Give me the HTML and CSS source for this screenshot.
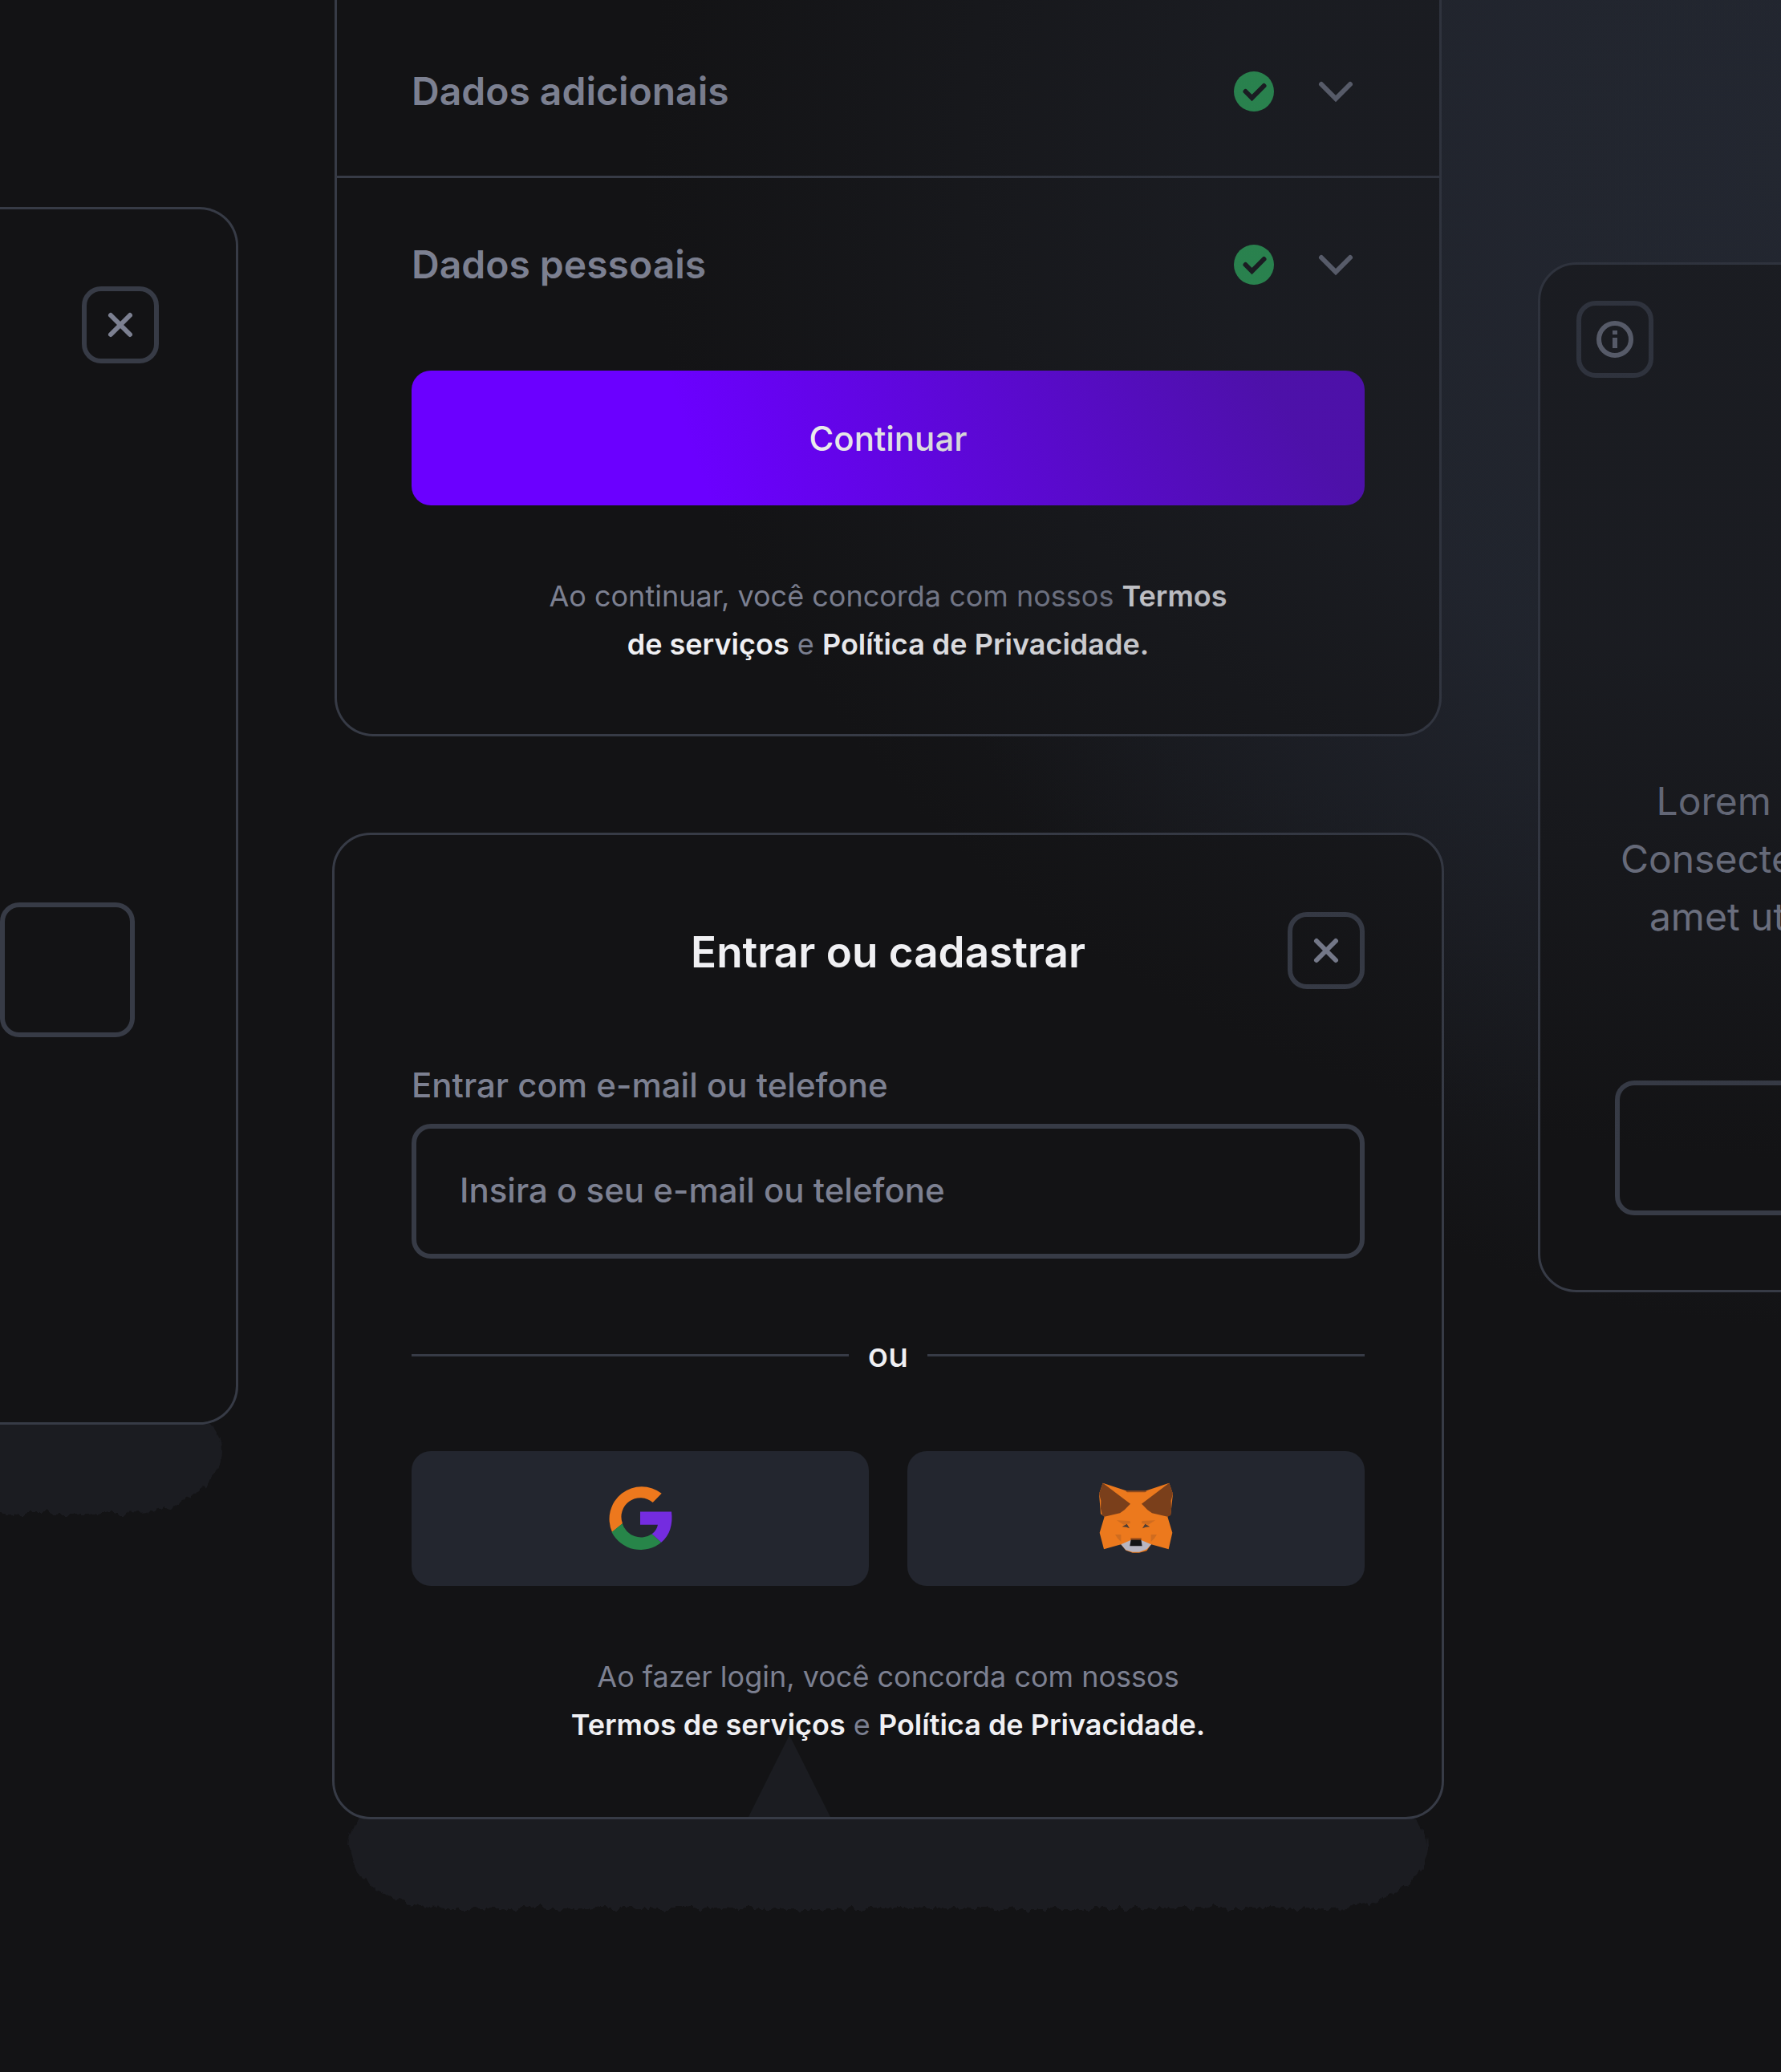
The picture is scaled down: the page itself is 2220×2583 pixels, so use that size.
FILE: index.html
```html
<!DOCTYPE html>
<html lang="pt-BR">
<head>
    <meta charset="UTF-8">
    <meta name="viewport" content="width=device-width, initial-scale=1">
    <title>Entrar ou cadastrar</title>
    <link rel="stylesheet" href="styles.css">
</head>
<body>
<main class="board">

    <section class="card card-left">
        <button type="button" class="icon-button" aria-label="Fechar">
            <svg width="48" height="48" viewBox="0 0 48 48"><path d="M12 12L36 36M36 12L12 36" stroke="#7c8091" stroke-width="6" stroke-linecap="round"/></svg>
        </button>
        <input type="text" class="field code-field" aria-label="Código">
    </section>

    <div class="column">
        <section class="card card-steps">
            <h2 class="step">
                <button type="button" class="step-button">
                    <span class="step-name">Dados adicionais</span>
                    <svg width="60" height="60" viewBox="0 0 60 60"><circle cx="30" cy="30" r="25" fill="#2dc262"/><path d="M19.500 30L27.500 38L42.500 23" fill="none" stroke="#141416" stroke-width="6" stroke-linecap="round"/></svg>
                    <svg width="72" height="72" viewBox="0 0 72 72"><path d="M18 27L36 45L54 27" fill="none" stroke="#7c8091" stroke-width="6" stroke-linecap="round"/></svg>
                </button>
            </h2>
            <h2 class="step">
                <button type="button" class="step-button">
                    <span class="step-name">Dados pessoais</span>
                    <svg width="60" height="60" viewBox="0 0 60 60"><circle cx="30" cy="30" r="25" fill="#2dc262"/><path d="M19.500 30L27.500 38L42.500 23" fill="none" stroke="#141416" stroke-width="6" stroke-linecap="round"/></svg>
                    <svg width="72" height="72" viewBox="0 0 72 72"><path d="M18 27L36 45L54 27" fill="none" stroke="#7c8091" stroke-width="6" stroke-linecap="round"/></svg>
                </button>
            </h2>
            <div class="steps-end">
                <button type="button" class="primary-button">Continuar</button>
                <p class="legal">Ao continuar, você concorda com nossos <a href="#termos">Termos<br>de serviços</a> e <a href="#privacidade">Política de Privacidade.</a></p>
            </div>
        </section>

        <section class="card card-login">
            <header class="login-header">
                <h1>Entrar ou cadastrar</h1>
                <button type="button" class="icon-button" aria-label="Fechar">
                    <svg width="48" height="48" viewBox="0 0 48 48"><path d="M12 12L36 36M36 12L12 36" stroke="#7c8091" stroke-width="6" stroke-linecap="round"/></svg>
                </button>
            </header>
            <form>
                <label for="contact">Entrar com e-mail ou telefone</label>
                <input type="text" id="contact" name="contact" class="field" placeholder="Insira o seu e-mail ou telefone">
            </form>
            <div class="or">ou</div>
            <div class="providers">
                <button type="button" class="provider" aria-label="Google">
                    <svg width="82" height="82" viewBox="-41 -41 82 82">
                        <path d="M26.700 -30.300A40.400 40.400 0 0 0 -35 18L-22 7.300A23.700 23.700 0 0 1 15.700 -19Z" fill="#ed781d"/>
                        <path d="M-35.500 18A40.400 40.400 0 0 0 26.300 30.700L14.700 20.300A24.500 24.500 0 0 1 -22.300 7.300Z" fill="#278549"/>
                        <path d="M0 -7.500H39C41 8 37 22 26.300 30.700L14.700 20.300C19 17 21 13 22 8.700H0Z" fill="#742ce0"/>
                    </svg>
                </button>
                <button type="button" class="provider" aria-label="MetaMask">
                    <svg width="92" height="88" viewBox="90 82 276 264">
                        <path d="M104 84L195 114H262L352 84L366 125L358 200L346 210L364 270L350 332L285 314L268 338L240 345H215L190 336L172 314L108 332L92 270L110 210L96 200L90 125Z" fill="#ec791d"/>
                        <path d="M104 84L207 162L185 185L168 197L110 210L102 205L96 180L97 150L90 125Z" fill="#7a3f1b"/>
                        <path d="M352 84L249 162L271 185L288 197L346 210L358 205L360 180L359 150L366 125Z" fill="#7a3f1b"/>
                        <path d="M190 116L196 113H262L268 116L262 119H196Z" fill="#8f4a1c"/>
                        <path d="M156 224L205 226L207 235L182 240ZM300 224L251 226L249 235L274 240ZM150 277H172V304L160 292ZM306 277H284V304L296 292Z" fill="#cf6c1f"/>
                        <path d="M172 314L208 298H248L285 314L268 332L240 342H215L190 335Z" fill="#b7b5c1"/>
                        <path d="M176 248L194 237L204 254L192 249ZM280 248L262 237L252 254L264 249Z" fill="#4d3d35"/>
                        <path d="M209 296H247L251 320H205Z" fill="#131315"/>
                        <path d="M208 290H248V296H208Z" fill="#9a4d1c"/>
                    </svg>
                </button>
            </div>
            <p class="legal">Ao fazer login, você concorda com nossos<br><a href="#termos">Termos de serviços</a> e <a href="#privacidade">Política de Privacidade.</a></p>
        </section>
    </div>

    <section class="card card-info">
        <button type="button" class="icon-button" aria-label="Informações">
            <svg width="48" height="48" viewBox="0 0 48 48"><circle cx="24" cy="24" r="20" fill="none" stroke="#7c8091" stroke-width="6"/><path d="M21 13H27V18H21ZM21 22H27V35H21Z" fill="#7c8091"/></svg>
        </button>
        <p class="info-text">Lorem ipsum dolor nisi.<br>Consectetur adipiscing elit,<br>amet ut sed do eiusmod</p>
        <input type="text" class="field" aria-label="Resposta">
    </section>

</main>

<!-- rough edge for the shadows under the cards -->
<svg class="defs" width="0" height="0" aria-hidden="true">
    <filter id="rough" x="-5%" y="-20%" width="110%" height="140%" color-interpolation-filters="sRGB">
        <feTurbulence type="fractalNoise" baseFrequency="0.12 0.02" numOctaves="3" seed="4"/>
        <feDisplacementMap in="SourceGraphic" scale="14" xChannelSelector="R" yChannelSelector="G"/>
    </filter>
</svg>
</body>
</html>
```
FILE: styles.css
```css
* {box-sizing: border-box;}
body {margin: 0; min-height: 100vh; position: relative; font-family: Inter, "Liberation Sans", sans-serif; color: #f0f0f3;
  background: radial-gradient(ellipse 52% 56% at 100% 8%, #22262f 0%, #1e2129 50%, #131315 100%) #131315;}
h1, h2, p {margin: 0;}
button, input {font-family: inherit; color: inherit;}
svg {display: block; flex: none;}
a {color: #f0f0f3; font-weight: 600; text-decoration: none;}

/* light that falls over everything from the top right */
body::after {content: ""; position: absolute; inset: 0; pointer-events: none;
  background: radial-gradient(ellipse 64% 48% at 100% 8%, rgba(36, 40, 50, 0.44) 0%, rgba(36, 40, 50, 0.42) 50%, rgba(36, 40, 50, 0) 100%);}

/* page layout */
.board {display: grid; grid-template-columns: 297fr 1386fr 303fr; column-gap: 117px; align-items: start; isolation: isolate;
  min-height: 100vh; padding-bottom: 150px; overflow: hidden;}
.column {display: flex; flex-direction: column; gap: 120px;}
.card {position: relative; background: #131315; border: 3px solid #373b46; border-radius: 48px;}

/* shared controls */
.icon-button {display: flex; align-items: center; justify-content: center; width: 96px; height: 96px; padding: 0;
  background: none; border: 6px solid #373b46; border-radius: 24px; cursor: pointer;}
.field {display: block; width: 100%; height: 168px; padding: 0 54px 3px; background: none; border: 6px solid #373b46; border-radius: 24px;
  font-size: 42px; font-weight: 500;}
.field::placeholder {color: #7c8091; opacity: 1;}
.legal {position: relative; z-index: 1; margin-top: 83px; text-align: center; font-size: 36px; line-height: 60px; color: #7c8091;}

/* left card */
.card-left {display: flex; flex-direction: column; margin-top: 258px; padding: 96px 96px 480px 0; border-left: none; border-radius: 0 48px 48px 0;}
.card-left .icon-button {align-self: flex-end;}
.code-field {width: 168px; margin-top: 672px;}

/* steps card */
.card-steps {margin: 0 3px; border-top: none; border-radius: 0 0 48px 48px;}
.step {padding: 72px 93px 0; font-size: 48px; line-height: 72px;}
.step:first-child {padding: 78px 93px 69px; border-bottom: 3px solid #373b46;}
.step-button {display: flex; align-items: center; gap: 36px; width: 100%; padding: 0; background: none; border: none;
  font-size: 48px; font-weight: 600; line-height: 72px; color: #7c8091; text-align: left; cursor: pointer;}
.step-name {flex: 1;}
.steps-end {padding: 96px 93px 82px;}
.primary-button {display: block; width: 100%; height: 168px; border: none; border-radius: 24px; background: #6b00ff;
  font-size: 42px; font-weight: 500; color: #fff; cursor: pointer;}

/* login card */
.card-login {padding: 96px 96px 85px;}
.login-header {display: grid; grid-template-columns: 96px 1fr 96px; align-items: center;}
.login-header h1 {grid-column: 2; padding-top: 3px; text-align: center; font-size: 53px; font-weight: 600; line-height: 72px;}
.card-login form {margin-top: 90px;}
.card-login label {display: block; margin-bottom: 18px; font-size: 42px; font-weight: 500; line-height: 60px; color: #7c8091;}
.or {display: flex; align-items: center; gap: 24px; margin: 90px 0; font-size: 42px; font-weight: 500; line-height: 60px;}
.or::before, .or::after {content: ""; flex: 1; height: 3px; background: #373b46;}
.providers {display: grid; grid-template-columns: 1fr 1fr; gap: 48px;}
.provider {display: flex; align-items: center; justify-content: center; height: 168px; padding: 0 0 3px; border: none; border-radius: 24px;
  background: #23262f; cursor: pointer;}
.card-login::before {content: ""; position: absolute; left: 516px; bottom: 0; width: 102px; height: 102px;
  background: #1b1c21; clip-path: polygon(50% 0, 100% 100%, 0 100%);}

/* rough shadows */
.card-left::after, .card-login::after {content: ""; position: absolute; z-index: -1; top: calc(100% - 12px); left: 18px; right: 18px; height: 126px;
  background: #1b1c21; border-radius: 48px 48px 120px 120px / 48px 48px 78px 78px; filter: url(#rough);}
.card-left::after {left: -180px;}

/* right card */
.card-info {margin: 327px -520px 0 0; padding: 45px 93px 93px;}
.card-info .icon-button {margin-left: -48px;}
.info-text {margin-top: 492px; margin-bottom: 168px; text-align: center; white-space: nowrap; font-size: 48px; line-height: 72px; color: #7c8091;}
.defs {position: absolute;}
```
